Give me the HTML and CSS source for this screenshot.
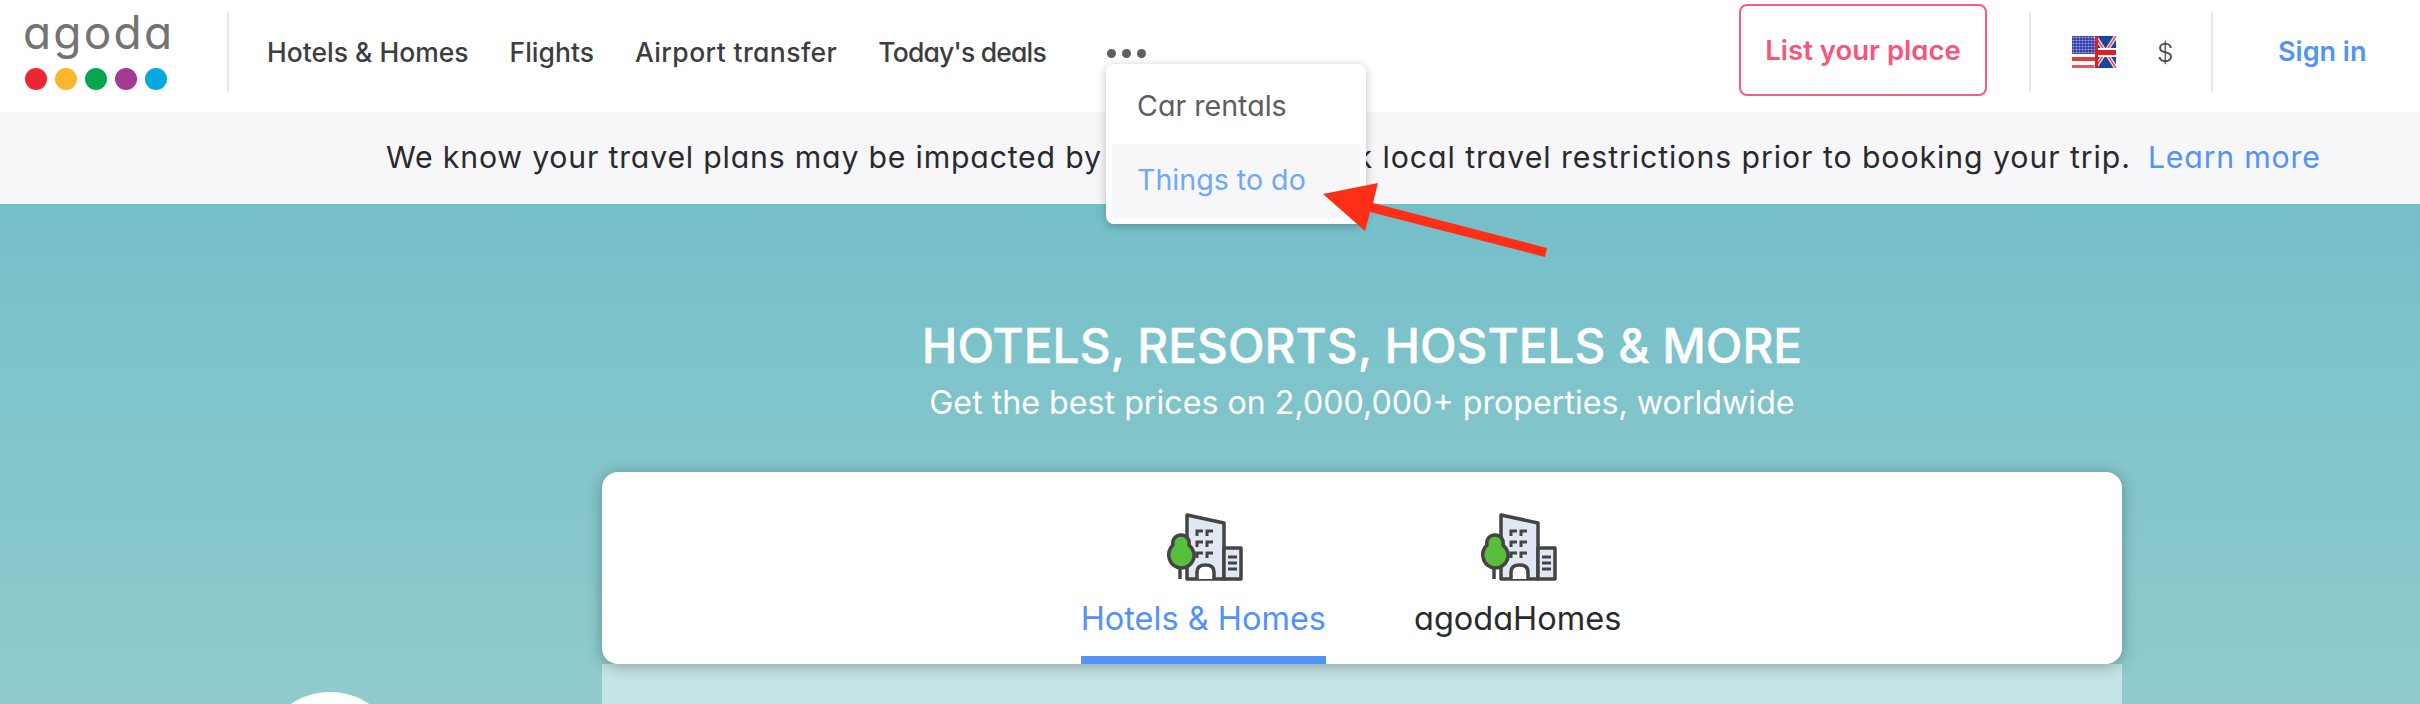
FILE: index.html
```html
<!DOCTYPE html>
<html lang="en">
<head>
<meta charset="utf-8">
<title>agoda</title>
<link rel="stylesheet" href="styles.css">
</head>
<body>
<svg class="defs" width="0" height="0" aria-hidden="true">
  <defs>
    <symbol id="hotel" viewBox="0 0 76 68">
      <path d="M13 50V66" fill="none" stroke="#444" stroke-width="3.500"/>
      <path d="M20 2L57 10V66H20Z" fill="#e1e8f3" stroke="#444" stroke-width="3.500" stroke-linejoin="round"/>
      <path d="M57 35H74V66H57Z" fill="#e1e8f3" stroke="#444" stroke-width="3.500" stroke-linejoin="round"/>
      <path d="M30 66V59Q30 52 38.500 52Q47 52 47 59V66" fill="#fff" stroke="#444" stroke-width="3.500"/>
      <path d="M14 22C8 22 5 27 6 32C3 35 1 39 2 44C3 51 9 55 14 55C20 55 26 51 27 44C28 39 25 35 22 32C23 27 20 22 14 22Z" fill="#57bf3c" stroke="#444" stroke-width="3.500"/>
      <path d="M36 18H30V23M46 18H40V23M36 29H30V34M46 29H40V34M36 40H30V45M46 40H40V45" fill="none" stroke="#444" stroke-width="3"/>
      <path d="M61 44H70M61 50H70M61 56H70" fill="none" stroke="#444" stroke-width="3"/>
    </symbol>
  </defs>
</svg>

<header class="topbar">
  <a class="logo">
    <span class="logo-word">agoda</span>
    <span class="logo-dots">
      <i class="dot dot-red"></i><i class="dot dot-yellow"></i><i class="dot dot-green"></i><i class="dot dot-purple"></i><i class="dot dot-blue"></i>
    </span>
  </a>
  <nav class="nav">
    <a>Hotels &amp; Homes</a>
    <a>Flights</a>
    <a class="nav-wide">Airport transfer</a>
    <a class="nav-tight">Today's deals</a>
    <span class="more"><i></i><i></i><i></i></span>
  </nav>
  <a class="list-place">List your place</a>
  <div class="locale">
    <svg class="flag" viewBox="0 0 44 32" width="44" height="32" aria-hidden="true">
      <defs>
        <pattern id="stars" width="3" height="3" patternUnits="userSpaceOnUse">
          <rect width="3" height="3" fill="#2b379f"/>
          <circle cx="1.500" cy="1.500" r="1.100" fill="#98a3e6"/>
        </pattern>
      </defs>
      <rect width="44" height="32" fill="#fff"/>
      <rect width="23" height="18" fill="url(#stars)"/>
      <rect y="21" width="23" height="4" fill="#e03a3a"/>
      <rect y="29" width="23" height="3" fill="#dd5a5a"/>
      <rect x="23" width="21" height="32" fill="#17469e"/>
      <path d="M23 0L44 32M44 0L23 32" stroke="#f3d6d8" stroke-width="4"/>
      <path d="M23 0L44 32M44 0L23 32" stroke="#e0525a" stroke-width="1.500"/>
      <rect x="23" y="12" width="21" height="9" fill="#fff"/>
      <rect x="23" y="14" width="21" height="5" fill="#dc1f26"/>
      <rect x="23" width="3" height="32" fill="#dc1f26"/>
    </svg>
    <span class="currency">$</span>
  </div>
  <a class="sign-in">Sign in</a>
</header>

<div class="notice">
  <p><span class="notice-lead">We know your travel plans may be impacted by</span> COVID-19. Check local travel restrictions prior to booking your trip.<a class="learn">Learn more</a></p>
</div>

<main class="hero">
  <span class="hero-circle"></span>
  <h1>HOTELS, RESORTS, HOSTELS &amp; MORE</h1>
  <p class="sub">Get the best prices on 2,000,000+ properties, worldwide</p>
  <section class="card">
    <a class="tab tab-active">
      <svg class="tab-icon" width="76" height="68"><use href="#hotel"/></svg>
      <span class="tab-label">Hotels &amp; Homes</span>
    </a>
    <a class="tab">
      <svg class="tab-icon" width="76" height="68"><use href="#hotel"/></svg>
      <span class="tab-label">agodaHomes</span>
    </a>
  </section>
  <div class="panel"></div>
</main>

<div class="menu">
  <a>Car rentals</a>
  <a class="menu-hover">Things to do</a>
</div>

<svg class="arrow" width="240" height="90" viewBox="0 0 240 90" aria-hidden="true">
  <path d="M3 24L58 13L53 33L227 78L225 87L50 42L45 61Z" fill="#ff2e17"/>
</svg>
</body>
</html>
```
FILE: styles.css
```css
* { box-sizing: border-box; }
html, body { margin: 0; height: 704px; overflow: hidden; background: #fff; }
body {
  font-family: Inter, "Liberation Sans", sans-serif;
  font-feature-settings: "cv11" 1;
  color: #2a2a2e;
  position: relative;
}
.defs { position: absolute; }
a { color: inherit; text-decoration: none; }

.topbar { height: 112px; display: flex; align-items: center; background: #fff; }
.logo {
  width: 229px; height: 80px; flex: none;
  border-right: 2px solid #e9e9eb;
  display: flex; flex-direction: column; padding-left: 23px;
  margin-bottom: 8px;
}
.logo-word {
  font-size: 46px; line-height: 50px; font-weight: 400; color: #737373;
  letter-spacing: 2.200px; height: 61px; margin-top: -5px;
}
.logo-dots { display: flex; gap: 8px; padding-left: 2px; }
.dot { width: 22px; height: 22px; border-radius: 50%; display: block; }
.dot-red { background: #ec2635; }
.dot-yellow { background: #fdb52b; }
.dot-green { background: #06a64f; }
.dot-purple { background: #a63a93; }
.dot-blue { background: #07a7e0; }

.nav {
  display: flex; align-items: center; gap: 41px; padding: 0 0 9px 38px;
  font-size: 26.500px; font-weight: 500; color: #3d3d40; flex: 1;
}
.nav-wide { letter-spacing: .4px; }
.nav-tight { letter-spacing: -.8px; }
.more { display: flex; gap: 6px; margin: 4px 0 0 20px; }
.more i { width: 9px; height: 9px; border-radius: 50%; background: #5f5f5f; display: block; }

.list-place {
  width: 248px; height: 92px; border: 2px solid #fb5a7e; border-radius: 8px;
  color: #f8557b; font-size: 27.500px; font-weight: 600;
  display: flex; align-items: center; justify-content: center;
  margin: 0 42px 12px 0; flex: none;
}
.locale {
  width: 184px; height: 80px; flex: none; margin-bottom: 8px;
  border-left: 2px solid #e9e9eb; border-right: 2px solid #e9e9eb;
  display: flex; align-items: center; padding-left: 41px; gap: 41px;
}
.flag { display: block; }
.currency { font-size: 26px; font-weight: 300; color: #444; }
.sign-in {
  width: 207px; flex: none; padding: 0 0 10px 65px;
  font-size: 27px; font-weight: 600; color: #5392f9;
}

.notice {
  height: 92px; background: #f7f7f9;
  display: flex; align-items: center; padding: 0 0 2px 386px;
  font-size: 30.250px; white-space: nowrap;
}
.notice p { margin: 0; letter-spacing: .93px; }
.notice-lead { letter-spacing: .8px; }
.learn { color: #5392f9; margin-left: 17px; letter-spacing: .8px; }

.hero {
  height: 500px; position: relative; overflow: hidden;
  background: linear-gradient(180deg, #75bfc9 0%, #90cccd 100%);
  display: flex; flex-direction: column; align-items: center;
  padding: 115px 0 0 304px; color: #fff;
}
.hero h1 {
  margin: 0; font-size: 47.800px; line-height: 54px; font-weight: 500; white-space: nowrap;
  -webkit-text-stroke: .4px #fff;
}
.sub { margin: 10px 0 0; font-size: 32.200px; line-height: 40px; white-space: nowrap; }
.card {
  width: 1520px; height: 192px; flex: none; margin-top: 49px; background: #fff;
  border-radius: 16px; box-shadow: 0 2px 16px rgba(0, 0, 0, .3);
  display: flex; justify-content: center; gap: 88px; position: relative; z-index: 1;
  padding-right: 22px; color: #2a2a2e;
}
.tab { display: flex; flex-direction: column; align-items: center; padding-top: 41px; height: 192px; }
.tab-icon { display: block; flex: none; margin-left: 3px; }
.tab-label { font-size: 32.500px; line-height: 40px; margin-top: 18px; white-space: nowrap; }
.tab-active { color: #5392f9; border-bottom: 8px solid #5392f9; }
.panel { width: 1520px; flex: 1; background: #c5e4e5; }
.hero-circle {
  position: absolute; left: 260px; top: 488px;
  width: 140px; height: 140px; border-radius: 50%; background: #fff;
}

.menu {
  position: absolute; left: 1106px; top: 64px; width: 260px; height: 160px;
  background: #fff; border-radius: 8px; padding: 6px;
  box-shadow: 0 2px 10px rgba(0, 0, 0, .25);
  font-size: 28.600px; color: #5d5d60;
  display: flex; flex-direction: column; justify-content: flex-end;
}
.menu a { height: 74px; display: flex; align-items: center; padding: 0 0 3px 25px; }
.menu-hover { background: #f7f7f9; color: #6fa8fa; }
.arrow { position: absolute; left: 1320px; top: 170px; }
```
